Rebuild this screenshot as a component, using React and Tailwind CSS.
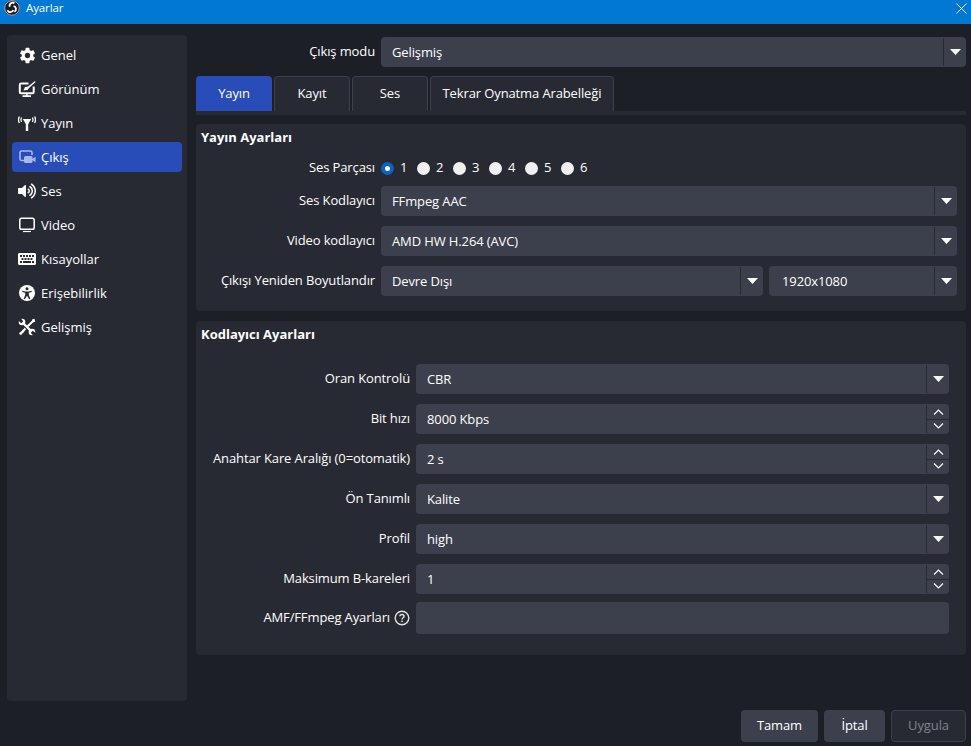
import React from "react";
import { FaKeyboard, FaVolumeUp } from "react-icons/fa";
import { IoSettingsSharp } from "react-icons/io5";

const GearIcon = () => <IoSettingsSharp className="h-[17px] w-[17px] text-white" />;
const AppearanceIcon = () => (
  <svg width="18" height="18" viewBox="0 0 18 18" fill="none">
    <path d="M10.500 3.500H3C2.300 3.500 1.800 4 1.800 4.700V12C1.800 12.700 2.300 13.200 3 13.200H14.500C15.200 13.200 15.700 12.700 15.700 12V6.500" stroke="white" strokeWidth="2" />
    <path d="M17 1 L10 6.500 L7 7 L5.500 10.500 L9.500 10 L11 8 L17.500 2Z" fill="white" />
    <path d="M8.800 13.500V15.500M4.500 16.200H13" stroke="white" strokeWidth="1.700" />
  </svg>
);
const AntennaIcon = () => (
  <svg width="18" height="18" viewBox="0 0 18 18" fill="none">
    <path d="M9 7V17" stroke="white" strokeWidth="2.400" />
    <path d="M4.800 5H13.200L10.200 10H7.800Z" fill="white" />
    <path d="M3.600 3.500C2.800 5 2.800 6.500 3.600 8M1.400 2.500C0.300 4.500 0.300 7 1.400 9M14.400 3.500C15.200 5 15.200 6.500 14.400 8M16.600 2.500C17.700 4.500 17.700 7 16.600 9" stroke="white" strokeWidth="1.300" />
  </svg>
);
const OutputIcon = () => (
  <svg width="18" height="18" viewBox="0 0 18 18" fill="none">
    <path d="M7 12.500H3.500C2.700 12.500 2 11.800 2 11V4.500C2 3.700 2.700 3 3.500 3H12.500C13.300 3 14 3.700 14 4.500V7" stroke="#a9b8e6" strokeWidth="1.600" />
    <rect x="6" y="8" width="8.500" height="7" rx="1.500" fill="#a9b8e6" />
    <path d="M14 11L17.500 8.700V14.300L14 12Z" fill="#a9b8e6" />
  </svg>
);
const SoundIcon = () => <FaVolumeUp className="h-[18px] w-[18px] text-white" />;
const VideoIcon = () => (
  <svg width="18" height="18" viewBox="0 0 18 18" fill="none">
    <rect x="1.800" y="2.300" width="14.400" height="11" rx="1.800" stroke="white" strokeWidth="1.500" />
    <path d="M5 15.500H13" stroke="white" strokeWidth="1.200" />
  </svg>
);
const KeyboardIcon = () => <FaKeyboard className="h-[18px] w-[18px] text-white" />;
const AccessIcon = () => (
  <svg width="18" height="18" viewBox="0 0 18 18">
    <circle cx="9" cy="9" r="8" fill="white" />
    <circle cx="9" cy="4.800" r="1.500" fill="#272a33" />
    <path d="M4.500 6.800L7.500 7.600H10.500L13.500 6.800L13.800 7.900L10.800 8.800V11L12.300 14.800L11.200 15.200L9 11.800L6.800 15.200L5.700 14.800L7.200 11V8.800L4.200 7.900Z" fill="#272a33" />
  </svg>
);
const ToolsIcon = () => (
  <svg width="18" height="18" viewBox="0 0 18 18" fill="none">
    <path d="M5 5L13 13" stroke="white" strokeWidth="2.400" />
    <circle cx="4" cy="4" r="3.300" fill="white" />
    <circle cx="14" cy="14" r="3.300" fill="white" />
    <path d="M0.500 1.500L4 4.500M1.500 0.500L4.500 4M17.500 16.500L14 13.500M16.500 17.500L13.500 14" stroke="#272a33" strokeWidth="2" />
    <path d="M15.800 2.200L9.500 8.500M7.500 10.500L4 14" stroke="white" strokeWidth="2" />
    <path d="M14 1.500L16.500 0.800L17.200 3.500L15.500 4.500Z" fill="white" />
    <path d="M5 12L6.500 13.500L2.800 17.200L0.800 15.200Z" fill="white" />
  </svg>
);

const nav = [
  ["Genel", GearIcon],
  ["Görünüm", AppearanceIcon],
  ["Yayın", AntennaIcon],
  ["Çıkış", OutputIcon],
  ["Ses", SoundIcon],
  ["Video", VideoIcon],
  ["Kısayollar", KeyboardIcon],
  ["Erişebilirlik", AccessIcon],
  ["Gelişmiş", ToolsIcon],
];

const ObsLogo = () => (
  <svg width="16" height="16" viewBox="0 0 16 16" fill="none">
    <circle cx="8" cy="8" r="7.700" fill="#1c1c22" />
    <circle cx="8" cy="8" r="7.300" stroke="#e8e8e8" strokeWidth="0.700" />
    <path d="M5.800 6.800A3 3 0 0 1 10.500 3.400" stroke="white" strokeWidth="1.800" />
    <path d="M9.200 5.900A3 3 0 0 1 11 11.300" stroke="white" strokeWidth="1.800" transform="rotate(10 8 8)" />
    <path d="M9.200 10A3 3 0 0 1 3.500 10.300" stroke="white" strokeWidth="1.800" />
  </svg>
);

const Arrow = () => (
  <svg width="11" height="6" viewBox="0 0 11 6">
    <path d="M0 0H11L5.500 6Z" fill="white" />
  </svg>
);

const Combo = ({ value, className = "", inset = "pl-[11px]" }) => (
  <div className={`flex h-[30px] items-stretch rounded-[4px] bg-[#3c404d] ${className}`}>
    <div className={`flex-1 text-[13px] leading-[30px] text-white ${inset}`}>{value}</div>
    <div className="my-[1px] flex w-[23px] items-center justify-center border-l border-[#272a33]">
      <Arrow />
    </div>
  </div>
);

const Spin = ({ value }) => (
  <div className="flex h-[30px] w-full items-stretch rounded-[4px] bg-[#3c404d]">
    <div className="flex-1 pl-[11px] text-[13px] leading-[30px] text-white">{value}</div>
    <div className="my-[1px] flex w-[23px] flex-col border-l border-[#272a33]">
      <div className="flex flex-1 items-center justify-center border-b border-[#272a33]">
        <svg width="11" height="6" viewBox="0 0 11 6" fill="none"><path d="M1 5.500L5.500 1L10 5.500" stroke="white" strokeWidth="1.100" /></svg>
      </div>
      <div className="flex flex-1 items-center justify-center">
        <svg width="11" height="6" viewBox="0 0 11 6" fill="none"><path d="M1 0.500L5.500 5L10 0.500" stroke="white" strokeWidth="1.100" /></svg>
      </div>
    </div>
  </div>
);

const Row = ({ label, labelW, children, className = "" }) => (
  <div className={`flex items-center ${className}`}>
    <div className={`shrink-0 pr-[6px] text-right text-[13px] text-white ${labelW}`}>{label}</div>
    <div className="min-w-0 flex-1">{children}</div>
  </div>
);

const Radio = ({ n, on }) => (
  <div className="flex w-[36px] items-center">
    {on ? (
      <div className="flex h-[13px] w-[13px] items-center justify-center rounded-full bg-[#0a62c4]">
        <div className="h-[5px] w-[5px] rounded-full bg-white" />
      </div>
    ) : (
      <div className="h-[13px] w-[13px] rounded-full bg-[#f0f0f0]" />
    )}
    <span className="ml-[6px] text-[13px] text-white">{n}</span>
  </div>
);

const Tab = ({ children, active, w }) => (
  <div
    className={`flex h-[35px] items-center justify-center rounded-t-[4px] text-[13px] text-white ${w} ${
      active ? "bg-[#284cb8]" : "border border-b-0 border-[#3c404d] bg-[#272a33]"
    }`}
  >
    {children}
  </div>
);

export default function App() {
  return (
    <div
      className="flex h-[746px] w-[971px] flex-col overflow-hidden bg-[#1d1f26] tracking-[-0.12px] text-white"
      style={{ fontFamily: '"Open Sans", sans-serif' }}
    >
      <div className="flex h-[24px] shrink-0 items-center bg-[#0078d4] pb-[8px] pl-[4px] pr-[4px]">
        <ObsLogo />
        <span className="ml-[6px] text-[11.5px]">Ayarlar</span>
        <svg className="ml-auto" width="11" height="11" viewBox="0 0 11 11" fill="none">
          <path d="M0.500 0.500L10.500 10.500M10.500 0.500L0.500 10.500" stroke="white" strokeWidth="1" />
        </svg>
      </div>
      <div className="flex flex-1 items-start pl-[7px] pt-[11px]">
        <nav className="flex h-[666px] w-[180px] shrink-0 flex-col gap-[4px] rounded-[4px] bg-[#272a33] px-[5px] pt-[5px] tracking-normal">
          {nav.map(([label, Icon], i) => (
            <div
              key={label}
              className={`flex h-[30px] items-center rounded-[4px] pl-[6px] text-[13px] ${i === 3 ? "bg-[#284cb8]" : ""}`}
            >
              <span className="flex w-[18px] items-center justify-center"><Icon /></span>
              <span className="ml-[5px] pt-[2px]">{label}</span>
            </div>
          ))}
        </nav>
        <main className="ml-[9px] w-[770px] shrink-0">
          <div className="mt-[2px]">
            <Row label="Çıkış modu" labelW="w-[185px]"><Combo value="Gelişmiş" /></Row>
          </div>
          <div className="mt-[9px] flex gap-[2px]">
            <Tab active w="w-[76px]">Yayın</Tab>
            <Tab w="w-[76px]">Kayıt</Tab>
            <Tab w="w-[76px]">Ses</Tab>
            <Tab w="w-[184px]">Tekrar Oynatma Arabelleği</Tab>
          </div>
          <div className="h-[4px] bg-[#272a33]" />
          <section className="mt-[9px] h-[187px] rounded-[4px] bg-[#272a33] pr-[9px]">
            <h2 className="pl-[5px] pt-[4px] text-[13px] font-bold leading-[18px] tracking-normal">Yayın Ayarları</h2>
            <Row label="Ses Parçası" labelW="w-[185px]" className="mt-[13px] h-[18px]">
              <div className="flex">
                {[1, 2, 3, 4, 5, 6].map((n) => <Radio key={n} n={n} on={n === 1} />)}
              </div>
            </Row>
            <div className="mt-[9px] flex flex-col gap-[10px]">
              <Row label="Ses Kodlayıcı" labelW="w-[185px]"><Combo value="FFmpeg AAC" /></Row>
              <Row label="Video kodlayıcı" labelW="w-[185px]"><Combo value="AMD HW H.264 (AVC)" /></Row>
              <Row label="Çıkışı Yeniden Boyutlandır" labelW="w-[185px]">
                <div className="flex gap-[6px]">
                  <Combo value="Devre Dışı" className="w-[382px]" />
                  <Combo value="1920x1080" className="flex-1" inset="pl-[13px]" />
                </div>
              </Row>
            </div>
          </section>
          <section className="mt-[10px] h-[334px] rounded-[4px] bg-[#272a33] pr-[17px]">
            <h2 className="pl-[5px] pt-[4px] text-[13px] font-bold leading-[18px] tracking-normal">Kodlayıcı Ayarları</h2>
            <div className="mt-[21px] flex flex-col gap-[10px]">
              <Row label="Oran Kontrolü" labelW="w-[220px]"><Combo value="CBR" /></Row>
              <Row label="Bit hızı" labelW="w-[220px]"><Spin value="8000 Kbps" /></Row>
              <Row label="Anahtar Kare Aralığı (0=otomatik)" labelW="w-[220px]"><Spin value="2 s" /></Row>
              <Row label="Ön Tanımlı" labelW="w-[220px]"><Combo value="Kalite" /></Row>
              <Row label="Profil" labelW="w-[220px]"><Combo value="high" /></Row>
              <Row label="Maksimum B-kareleri" labelW="w-[220px]"><Spin value="1" /></Row>
            </div>
            <Row
              label={
                <span className="inline-flex items-center justify-end">
                  AMF/FFmpeg Ayarları
                  <svg className="ml-[4px]" width="16" height="16" viewBox="0 0 16 16" fill="none">
                    <circle cx="8" cy="8" r="6.800" stroke="#e0e0e0" strokeWidth="1.400" />
                    <path d="M5.900 6.300C5.900 5.100 6.800 4.500 8 4.500C9.200 4.500 10.100 5.200 10.100 6.300C10.100 7.700 8 7.800 8 9.500" stroke="#e0e0e0" strokeWidth="1.500" />
                    <circle cx="8" cy="11.300" r="0.900" fill="#e0e0e0" />
                  </svg>
                </span>
              }
              labelW="w-[220px]"
              className="mt-[8px]"
            >
              <div className="h-[32px] rounded-[4px] bg-[#3c404d]" />
            </Row>
          </section>
          <div className="mt-[55px] flex justify-end gap-[6px]">
            <div className="flex h-[32px] w-[77px] items-center justify-center rounded-[4px] bg-[#3c404d] text-[13px]">Tamam</div>
            <div className="flex h-[32px] w-[61px] items-center justify-center rounded-[4px] bg-[#3c404d] text-[13px]">İptal</div>
            <div className="flex h-[32px] w-[75px] items-center justify-center rounded-[4px] border border-[#3c404d] bg-[#272a33] text-[13px] text-[#7f828a]">Uygula</div>
          </div>
        </main>
      </div>
    </div>
  );
}
